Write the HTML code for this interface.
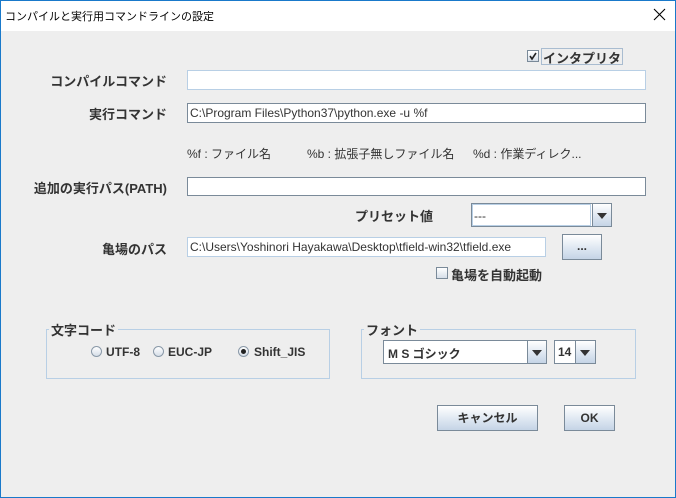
<!DOCTYPE html>
<html><head><meta charset="utf-8"><style>
*{box-sizing:border-box;margin:0;padding:0}
body{width:676px;height:498px;overflow:hidden;background:#eeeeee;font-family:"Liberation Sans","Noto Sans CJK JP",sans-serif;font-size:12px;color:#333;position:relative}
.a{position:absolute;white-space:nowrap}
.win{position:absolute;left:0;top:0;width:676px;height:498px;border:1px solid #1979ca;border-top:none}
.title{position:absolute;left:0;top:0;width:676px;height:31px;background:#fff;border-top:1px solid #1979ca}
.lbl{position:absolute;font-weight:bold;font-size:13px;color:#333;text-align:right;white-space:nowrap}
.fld{position:absolute;background:#fff;border:1px solid #7a8a99;font-size:12px;color:#333;padding:2px 0 0 2px;white-space:nowrap;overflow:hidden}
.btn{position:absolute;border:1px solid #7a8a99;background:linear-gradient(#ffffff,#dbe5f0 60%,#c5d4e6);font-weight:bold;text-align:center;color:#333}
.arrow{position:absolute;width:0;height:0;border-left:5px solid transparent;border-right:5px solid transparent;border-top:6px solid #333}
.grp{position:absolute;border:1px solid #b8cfe5}
.radio{position:absolute;width:11px;height:11px;border-radius:50%;border:1px solid #8a99a8;background:linear-gradient(#fff,#d6dee8)}
.cb{position:absolute;width:12px;height:12px;border:1px solid #7a8a99;background:linear-gradient(#fff,#d6dee8)}
</style></head><body>
<div class="title"></div>
<div class="a" style="left:5px;top:8px;font-size:11px;color:#000">コンパイルと実行用コマンドラインの設定</div>
<svg class="a" style="left:653px;top:8px" width="13" height="13"><path d="M1 1L12 12M12 1L1 12" stroke="#000" stroke-width="1.1"/></svg>
<div class="win"></div>

<div class="cb" style="left:527px;top:50px"></div>
<svg class="a" style="left:528px;top:51px" width="10" height="10"><path d="M2 5L4 8L8 2" stroke="#222" stroke-width="1.6" fill="none"/></svg>
<div class="a" style="left:541px;top:48px;width:82px;height:17px;border:1px solid #a9bcd0"></div>
<div class="lbl" style="left:543px;top:48px">インタプリタ</div>

<div class="lbl" style="right:509px;top:71px">コンパイルコマンド</div>
<div class="fld" style="left:187px;top:70px;width:459px;height:20px;border-color:#b8cfe5"></div>

<div class="lbl" style="right:509px;top:104px">実行コマンド</div>
<div class="fld" style="left:187px;top:103px;width:459px;height:20px">C:\Program Files\Python37\python.exe -u %f</div>

<div class="a" style="left:187px;top:145px;color:#333">%f : ファイル名</div>
<div class="a" style="left:307px;top:145px;color:#333">%b : 拡張子無しファイル名</div>
<div class="a" style="left:473px;top:145px;color:#333">%d : 作業ディレク...</div>

<div class="lbl" style="right:509px;top:178px">追加の実行パス(PATH)</div>
<div class="fld" style="left:187px;top:177px;width:459px;height:19px"></div>

<div class="lbl" style="right:243px;top:206px">プリセット値</div>
<div class="fld" style="left:471px;top:203px;width:141px;height:24px;padding-top:5px;border-color:#7a8a99">---</div>
<div class="a" style="left:472px;top:204px;width:119px;height:22px;border:1px solid #b8cfe5"></div>
<div class="btn" style="left:592px;top:203px;width:20px;height:24px"></div>
<div class="arrow" style="left:597px;top:213px"></div>

<div class="lbl" style="right:509px;top:239px">亀場のパス</div>
<div class="fld" style="left:187px;top:237px;width:359px;height:20px;border-color:#b8cfe5">C:\Users\Yoshinori Hayakawa\Desktop\tfield-win32\tfield.exe</div>
<div class="btn" style="left:562px;top:234px;width:40px;height:26px;line-height:22px">...</div>

<div class="cb" style="left:436px;top:267px"></div>
<div class="lbl" style="left:451px;top:265px">亀場を自動起動</div>

<div class="grp" style="left:46px;top:329px;width:284px;height:50px"></div>
<div class="lbl" style="left:49px;top:320px;background:#eeeeee;padding:0 2px">文字コード</div>
<div class="radio" style="left:91px;top:346px"></div>
<div class="lbl" style="left:106px;top:345px;font-size:12px">UTF-8</div>
<div class="radio" style="left:153px;top:346px"></div>
<div class="lbl" style="left:168px;top:345px;font-size:12px">EUC-JP</div>
<div class="radio" style="left:238px;top:346px"></div>
<div class="a" style="left:241px;top:349px;width:5px;height:5px;border-radius:50%;background:#222"></div>
<div class="lbl" style="left:254px;top:345px;font-size:12px">Shift_JIS</div>

<div class="grp" style="left:361px;top:329px;width:275px;height:50px"></div>
<div class="lbl" style="left:364px;top:320px;background:#eeeeee;padding:0 2px">フォント</div>
<div class="fld" style="left:383px;top:340px;width:164px;height:24px;padding:4px 0 0 4px;font-weight:bold;border-color:#7a8a99">M S ゴシック</div>
<div class="btn" style="left:527px;top:340px;width:20px;height:24px"></div>
<div class="arrow" style="left:532px;top:350px"></div>
<div class="fld" style="left:554px;top:340px;width:42px;height:24px;padding:4px 0 0 3px;font-weight:bold">14</div>
<div class="btn" style="left:575px;top:340px;width:21px;height:24px"></div>
<div class="arrow" style="left:580px;top:350px"></div>

<div class="btn" style="left:437px;top:405px;width:101px;height:26px;line-height:24px">キャンセル</div>
<div class="btn" style="left:564px;top:405px;width:51px;height:26px;line-height:24px">OK</div>
</body></html>
